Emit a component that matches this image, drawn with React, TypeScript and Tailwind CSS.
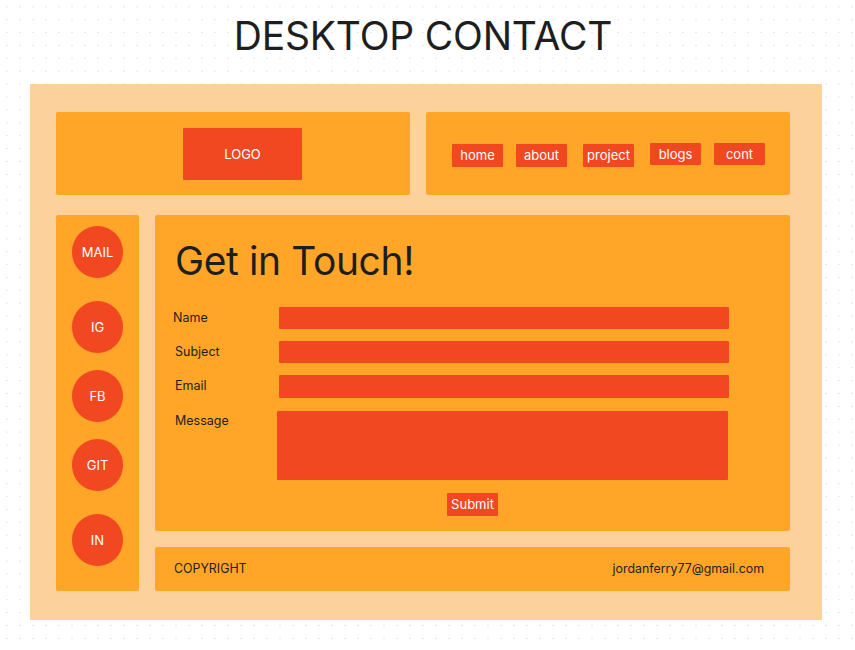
import React from "react";

const RED = "bg-[#F24822]";

function NavBtn({ label, mt, ml, h }: { label: string; mt: string; ml: string; h: string }) {
  return (
    <div className={`${RED} ${mt} ${ml} ${h} w-[51px] rounded-[1px] flex items-center justify-center text-white text-[13px] leading-none`}>
      {label}
    </div>
  );
}

function Circle({ label, mt }: { label: string; mt: string }) {
  return (
    <div className={`${RED} ${mt} w-[51px] h-[52px] rounded-full flex items-center justify-center text-white text-[13px] leading-none`}>
      {label}
    </div>
  );
}

function Row({ label, labelMl, inputMl, inputW, h, mt, labelPt }: { label: string; labelMl: string; inputMl: string; inputW: string; h: string; mt: string; labelPt?: string }) {
  return (
    <div className={`flex ${mt} ${labelPt ? "items-start" : "items-center"}`}>
      <div className={`w-[106px] ${labelMl} ${labelPt ?? ""} text-[12.5px] leading-none text-[#1E1E1E]`}>{label}</div>
      <div className={`${RED} ${inputMl} ${inputW} ${h} rounded-[1px]`} />
    </div>
  );
}

export default function App() {
  return (
    <div
      className="w-[855px] h-[650px] overflow-hidden bg-white bg-[radial-gradient(circle,#cfcfcf_0.8px,transparent_1px)] bg-[size:13px_12.9px] bg-[position:0.5px_0.3px]"
      style={{ fontFamily: "Inter, 'Liberation Sans', sans-serif" }}
    >
      <div className="w-[846px] pt-[12px] text-center text-[39px] leading-[47px] text-[#1E1E1E] tracking-[-0.2px]">
        DESKTOP CONTACT
      </div>
      <div className="ml-[30px] mt-[25px] w-[792px] h-[536px] bg-[#FCD19C] pl-[26px] pt-[28px] pr-[32px] pb-[29px] flex flex-col gap-[20px]">
        {/* header */}
        <div className="flex gap-[16px] h-[83px]">
          <div className="w-[354px] h-full bg-[#FFA629] rounded-[2px] pl-[127px] pt-[16px]">
            <div className={`${RED} w-[119px] h-[52px] rounded-[1px] flex items-center justify-center text-white text-[13px] leading-none`}>
              LOGO
            </div>
          </div>
          <div className="w-[364px] h-full bg-[#FFA629] rounded-[2px] pl-[26px] flex items-start">
            <NavBtn label="home" mt="mt-[32px]" ml="ml-0" h="h-[23px]" />
            <NavBtn label="about" mt="mt-[32px]" ml="ml-[13px]" h="h-[23px]" />
            <NavBtn label="project" mt="mt-[32px]" ml="ml-[16px]" h="h-[23px]" />
            <NavBtn label="blogs" mt="mt-[31px]" ml="ml-[16px]" h="h-[22px]" />
            <NavBtn label="cont" mt="mt-[31px]" ml="ml-[13px]" h="h-[22px]" />
          </div>
        </div>
        {/* body */}
        <div className="flex gap-[16px] flex-1">
          <div className="w-[83px] h-full bg-[#FFA629] rounded-[2px] pl-[16px] pt-[11px] flex flex-col">
            <Circle label="MAIL" mt="mt-0" />
            <Circle label="IG" mt="mt-[23px]" />
            <Circle label="FB" mt="mt-[17px]" />
            <Circle label="GIT" mt="mt-[17px]" />
            <Circle label="IN" mt="mt-[23px]" />
          </div>
          <div className="flex-1 flex flex-col gap-[16px]">
            <div className="h-[316px] bg-[#FFA629] rounded-[2px] pt-[22px] flex flex-col">
              <div className="ml-[20px] text-[39px] leading-[47px] text-[#1E1E1E] tracking-[-0.4px]">Get in Touch!</div>
              <div className="mt-[23px] flex flex-col">
                <Row label="Name" labelMl="ml-[18px]" inputMl="ml-0" inputW="w-[450px]" h="h-[22px]" mt="mt-0" />
                <Row label="Subject" labelMl="ml-[20px]" inputMl="-ml-[2px]" inputW="w-[450px]" h="h-[22px]" mt="mt-[12px]" />
                <Row label="Email" labelMl="ml-[20px]" inputMl="-ml-[2px]" inputW="w-[450px]" h="h-[23px]" mt="mt-[12px]" />
                <Row label="Message" labelMl="ml-[20px]" inputMl="-ml-[4px]" inputW="w-[451px]" h="h-[69px]" mt="mt-[13px]" labelPt="pt-[4px]" />
              </div>
              <div className="mt-[13px] flex justify-center">
                <div className={`${RED} w-[51px] h-[23px] rounded-[1px] flex items-center justify-center text-white text-[13px] leading-none`}>
                  Submit
                </div>
              </div>
            </div>
            <div className="flex-1 bg-[#FFA629] rounded-[2px] pl-[19px] pr-[26px] flex items-center justify-between text-[12.4px] leading-none text-[#1E1E1E]">
              <span>COPYRIGHT</span>
              <span>jordanferry77@gmail.com</span>
            </div>
          </div>
        </div>
      </div>
    </div>
  );
}
